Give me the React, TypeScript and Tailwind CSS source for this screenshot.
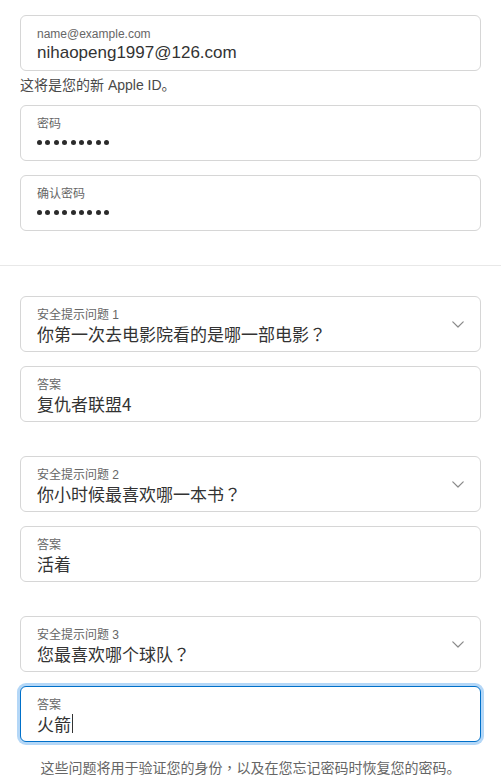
import React from "react";

const FONT = { fontFamily: '"Liberation Sans", "Noto Sans CJK SC", sans-serif' };
const CJK = { fontFamily: '"Noto Sans CJK SC", "Liberation Sans", sans-serif' };
const PUNCT = { fontFamily: '"Noto Sans CJK TC", "Noto Sans CJK SC", sans-serif' };

const Chevron = () => (
  <svg width="12" height="7" viewBox="0 0 12 7" fill="none" className="shrink-0">
    <path d="M0.8 0.8l5.2 5.2 5.2-5.2" stroke="#8a8a8a" strokeWidth="1.2" strokeLinecap="round" strokeLinejoin="round" />
  </svg>
);

// fullwidth punctuation centred in its box, like the reference font
const Cjk = ({ text }: { text: string }) => (
  <>
    {text.split(/([？，])/).map((part, i) =>
      part === "？" || part === "，" ? (
        <span key={i} style={PUNCT}>{part}</span>
      ) : (
        <React.Fragment key={i}>{part}</React.Fragment>
      )
    )}
  </>
);

type FieldProps = {
  label: string;
  value?: string;
  password?: boolean;
  select?: boolean;
  focused?: boolean;
  cjk?: boolean;
};

const Field = ({ label, value, password, select, focused, cjk }: FieldProps) => {
  return (
    <div
      className={
        focused
          ? "h-14 rounded-md border border-[#0070c9] shadow-[0_0_0_3px_#b4d7f7] bg-white flex items-center pl-4 pr-4"
          : "h-14 rounded-md border border-[#d6d6d6] bg-white flex items-center pl-4 pr-4"
      }
    >
      <div className="flex-1 flex flex-col pt-[3px]">
        <span className="text-[12px] leading-4 text-[#666]">{label}</span>
        {password ? (
          <div className="flex items-center gap-[3.4px] h-[22px]">
            {Array.from({ length: 9 }).map((_, i) => (
              <span key={i} className="w-[5px] h-[5px] rounded-full bg-[#2b2b2b]" />
            ))}
          </div>
        ) : (
          <span className="text-[17px] leading-[22px] text-[#333] flex items-center" style={cjk ? CJK : undefined}>
            {cjk ? <Cjk text={value ?? ""} /> : value}
            {focused && <span className="inline-block w-px h-[19px] bg-[#333] ml-[1px]" />}
          </span>
        )}
      </div>
      {select && <Chevron />}
    </div>
  );
};

export default function App() {
  return (
    <div className="w-[501px] min-h-[777px] bg-white" style={FONT}>
      <div className="px-5 pt-[15px] flex flex-col">
        <Field label="name@example.com" value="nihaopeng1997@126.com" />
        <p className="text-[14px] leading-5 text-[#494949] mt-[4px] mb-[10px]">这将是您的新 Apple ID。</p>
        <div className="flex flex-col gap-[14px]">
          <Field label="密码" password />
          <Field label="确认密码" password />
        </div>
      </div>
      <div className="h-px bg-[#e8e8e8] mt-[34px]" />
      <div className="px-5 pt-[30px] flex flex-col">
        <div className="flex flex-col gap-[14px]">
          <Field label="安全提示问题 1" value="你第一次去电影院看的是哪一部电影？" select cjk />
          <Field label="答案" value="复仇者联盟4" cjk />
        </div>
        <div className="flex flex-col gap-[14px] mt-[34px]">
          <Field label="安全提示问题 2" value="你小时候最喜欢哪一本书？" select cjk />
          <Field label="答案" value="活着" cjk />
        </div>
        <div className="flex flex-col gap-[14px] mt-[34px]">
          <Field label="安全提示问题 3" value="您最喜欢哪个球队？" select cjk />
          <Field label="答案" value="火箭" focused cjk />
        </div>
        <p className="text-[14px] text-center text-[#666] mt-[15px] leading-5" style={CJK}>
          <Cjk text="这些问题将用于验证您的身份，以及在您忘记密码时恢复您的密码。" />
        </p>
      </div>
    </div>
  );
}
